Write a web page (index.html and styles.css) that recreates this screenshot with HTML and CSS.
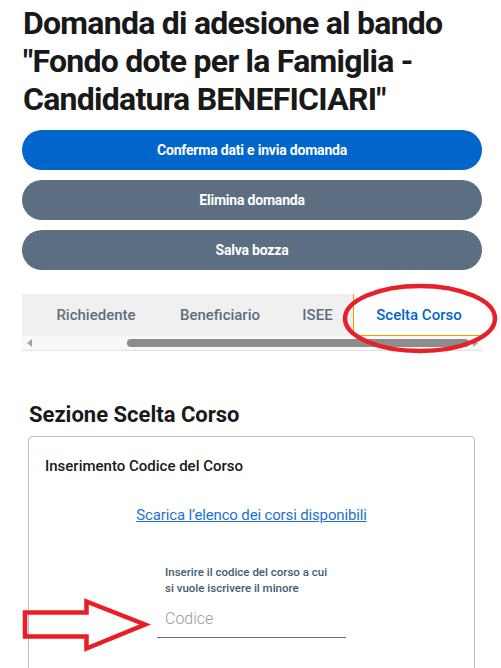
FILE: index.html
```html
<!DOCTYPE html>
<html lang="it">
<head>
<meta charset="utf-8">
<title>Domanda di adesione al bando</title>
<link rel="stylesheet" href="styles.css">
</head>
<body>
<main class="page">
  <h1 class="title">Domanda di adesione al bando<br>"Fondo dote per la Famiglia -<br>Candidatura BENEFICIARI"</h1>

  <div class="actions">
    <button class="btn btn-primary" type="button">Conferma dati e invia domanda</button>
    <button class="btn btn-secondary" type="button">Elimina domanda</button>
    <button class="btn btn-secondary" type="button">Salva bozza</button>
  </div>

  <nav class="tabs-wrap">
    <div class="tabs">
      <a class="tab tab-wide">Richiedente</a>
      <a class="tab tab-wide">Beneficiario</a>
      <a class="tab tab-short">ISEE</a>
      <a class="tab tab-active">Scelta Corso</a>
    </div>
    <div class="scrollbar">
      <span class="sb-arrow sb-left"></span>
      <span class="sb-track"><span class="sb-thumb"></span></span>
      <span class="sb-arrow sb-right"></span>
    </div>
  </nav>

  <section class="section">
    <h2 class="section-title">Sezione Scelta Corso</h2>
    <div class="card">
      <h3 class="card-title">Inserimento Codice del Corso</h3>
      <div class="link-row"><a class="link" href="#">Scarica l’elenco dei corsi disponibili</a></div>
      <div class="field">
        <label class="field-label" for="codice">Inserire il codice del corso a cui<br>si vuole iscrivere il minore</label>
        <input class="field-input" id="codice" type="text" placeholder="Codice">
      </div>
    </div>
  </section>

  <svg class="annotations" width="501" height="668" viewBox="0 0 501 668" aria-hidden="true">
    <ellipse cx="420" cy="318.5" rx="75" ry="32.5" fill="none" stroke="#e8202a" stroke-width="4.5"/>
    <polygon points="25,612.5 86.5,612.5 86.5,601.5 145,624.5 86.5,648.5 86.5,636.5 25,636.5" fill="none" stroke="#ec1c24" stroke-width="4.5" stroke-linejoin="miter"/>
  </svg>
</main>
</body>
</html>
```

FILE: styles.css
```css
html, body {
  margin: 0;
  padding: 0;
  overflow: hidden;
  background: #ffffff;
}

body {
  font-family: Roboto, "Liberation Sans", sans-serif;
  color: #19191a;
}

.page {
  position: relative;
  padding: 4px 19px 0 22px;
}

.title {
  margin: 0 0 0 1px;
  font-size: 32px;
  line-height: 38px;
  font-weight: 700;
  letter-spacing: -0.75px;
  color: #19191a;
}

.actions {
  margin-top: 12px;
  display: flex;
  flex-direction: column;
  gap: 10px;
}

.btn {
  height: 40px;
  border: none;
  border-radius: 20px;
  color: #ffffff;
  font-family: Roboto, "Liberation Sans", sans-serif;
  font-size: 14px;
  font-weight: 700;
  letter-spacing: -0.2px;
  padding: 0 16px;
}

.btn-primary { background: #0066cc; }
.btn-secondary { background: #5c6f82; }

.tabs-wrap {
  margin-top: 24px;
  border-bottom: 1px solid #dae2ec;
}

.tabs {
  display: flex;
  height: 42px;
  background: #f0f0f0;
  padding-left: 12px;
  overflow: hidden;
}

.tab {
  flex: none;
  display: flex;
  align-items: center;
  justify-content: center;
  font-size: 15px;
  font-weight: 500;
  color: #5c6f82;
}

.tab-wide { width: 124px; }
.tab-short { width: 71px; }

.tab-active {
  width: 131px;
  background: #ffffff;
  color: #0066cc;
  border-left: 1px solid #ff9900;
  border-bottom: 1px solid #ff9900;
  box-sizing: border-box;
}

.scrollbar {
  height: 14px;
  background: #f8f8f8;
  display: flex;
  align-items: center;
}

.sb-arrow {
  flex: none;
  width: 0;
  height: 0;
  border-top: 4px solid transparent;
  border-bottom: 4px solid transparent;
}

.sb-left {
  margin-left: 5px;
  border-right: 5px solid #a3a3a3;
}

.sb-right {
  margin-right: 4px;
  border-left: 5px solid #a3a3a3;
}

.sb-track {
  flex: 1;
  display: flex;
  padding: 0 4px 0 95px;
}

.sb-thumb {
  flex: 1;
  height: 8px;
  border-radius: 4px;
  background: #8c8c8c;
}

.section {
  margin-top: 50px;
  padding: 0 7px 0 6px;
}

.section-title {
  margin: 0 0 0 1px;
  font-size: 22px;
  line-height: 28px;
  font-weight: 700;
  color: #19191a;
}

.card {
  margin-top: 7px;
  border: 1px solid #bdbdbd;
  border-radius: 4px;
  padding: 19px 16px 120px;
}

.card-title {
  margin: 0;
  font-size: 15px;
  line-height: 20px;
  font-weight: 500;
  color: #19191a;
}

.link-row {
  margin-top: 29px;
  text-align: center;
  font-size: 15px;
  line-height: 20px;
  letter-spacing: -0.15px;
}

.link {
  color: #1f6fcf;
  text-decoration: underline;
}

.field {
  width: 189px;
  margin: 39px auto 0;
  display: flex;
  flex-direction: column;
}

.field-label {
  padding-left: 8px;
  font-size: 11.5px;
  line-height: 16px;
  font-weight: 500;
  color: #455b71;
}

.field-input {
  height: 42px;
  box-sizing: border-box;
  border: none;
  border-bottom: 1px solid #5c6f82;
  padding: 4px 8px 0;
  font-family: Roboto, "Liberation Sans", sans-serif;
  font-size: 16px;
  color: #19191a;
  background: transparent;
  outline: none;
}

.field-input::placeholder {
  color: #9a9a9a;
  font-weight: 300;
}

.annotations {
  position: absolute;
  left: 0;
  top: 0;
  pointer-events: none;
}
```
